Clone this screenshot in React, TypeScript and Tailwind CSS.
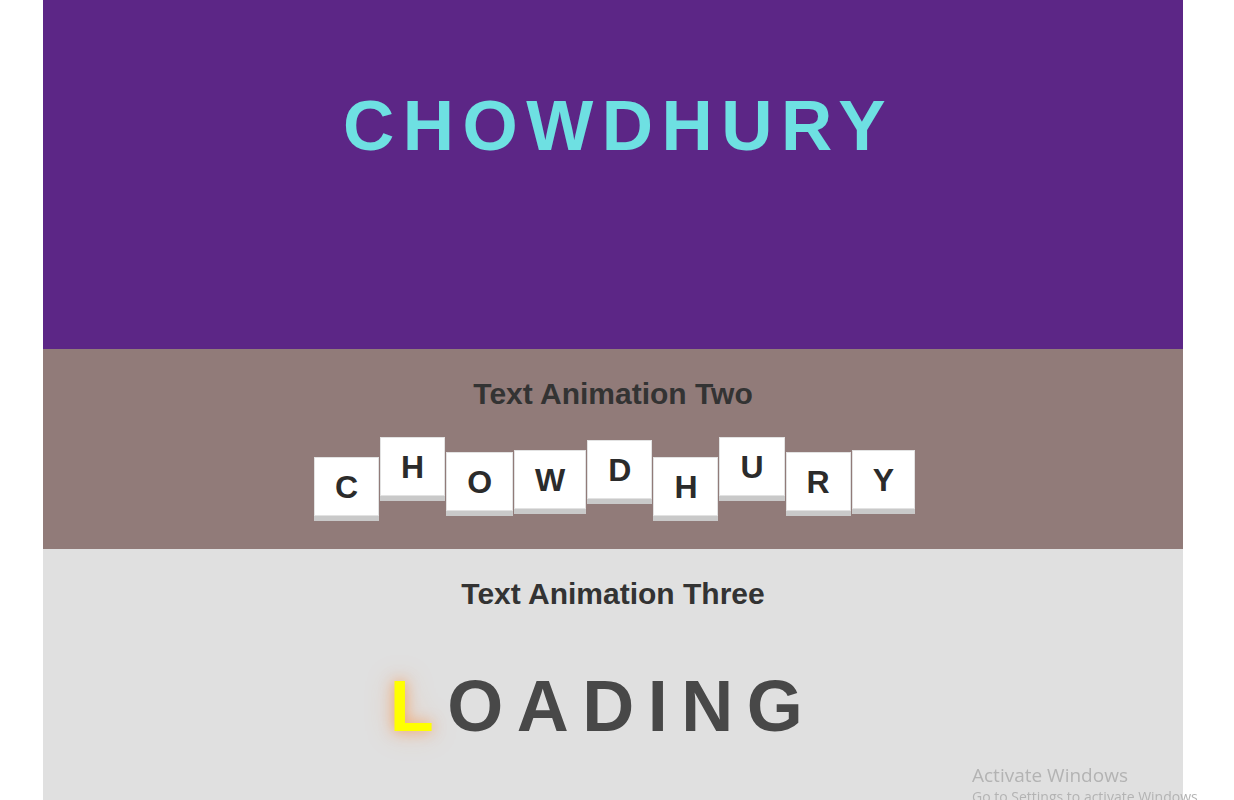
const tiles = [
  { ch: 'C', mt: 'mt-[20px]' },
  { ch: 'H', mt: 'mt-0' },
  { ch: 'O', mt: 'mt-[15px]' },
  { ch: 'W', mt: 'mt-[13px]' },
  { ch: 'D', mt: 'mt-[3px]' },
  { ch: 'H', mt: 'mt-[20px]' },
  { ch: 'U', mt: 'mt-0' },
  { ch: 'R', mt: 'mt-[15px]' },
  { ch: 'Y', mt: 'mt-[13px]' },
];

export default function App() {
  return (
    <div className="min-h-[800px] bg-white font-['Liberation_Sans',Arial,sans-serif]">
      <div className="ml-[43px] w-[1140px]">
        {/* animation one */}
        <section className="h-[349px] bg-[#5c2686] pt-[90px] pl-[11px] text-center">
          <h1 className="text-[71px] leading-none font-bold tracking-[8.5px] text-[#6ee0e2]">CHOWDHURY</h1>
        </section>

        {/* animation two */}
        <section className="h-[200px] bg-[#917b79] pt-[30px]">
          <h2 className="text-center text-[30px] leading-none font-bold text-[#333]">Text Animation Two</h2>
          <div className="mt-[28px] flex items-start justify-center gap-px pl-[3px]">
            {tiles.map((t, i) => (
              <span
                key={i}
                className={`${t.mt} flex h-[59px] items-center justify-center border border-[#e2e2e2] bg-white px-[20px] text-[32px] leading-none font-bold text-[#2b2b2b] shadow-[0_5px_0_#c9c9c9]`}
              >
                {t.ch}
              </span>
            ))}
          </div>
        </section>

        {/* animation three */}
        <section className="h-[251px] bg-[#e0e0e0] pt-[30px]">
          <h2 className="text-center text-[30px] leading-none font-bold text-[#333]">Text Animation Three</h2>
          <div className="mt-[61px] pr-[20px] text-center text-[72px] leading-none font-bold tracking-[13.5px] text-[#484848]">
            <span className="text-[#ffff00] [text-shadow:0_0_14px_rgba(255,110,0,0.5),0_0_28px_rgba(255,140,60,0.35)]">L</span>
            OADING
          </div>
        </section>
      </div>

      <div className="fixed left-[972px] top-[763px] font-['Open_Sans',sans-serif] text-[#b3b3b3]">
        <div className="text-[19px] leading-[25px]">Activate Windows</div>
        <div className="text-[14px] leading-[18px] whitespace-nowrap">Go to Settings to activate Windows.</div>
      </div>
    </div>
  );
}
